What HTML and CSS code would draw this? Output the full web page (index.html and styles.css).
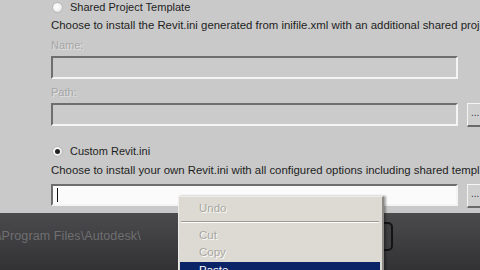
FILE: index.html
```html
<!DOCTYPE html>
<html>
<head>
<meta charset="utf-8">
<link rel="stylesheet" href="styles.css">
</head>
<body>
<div class="screen">
  <div class="panel">
    <div class="radio-row r1">
      <span class="radio"></span>
      <span class="radio-label">Shared Project Template</span>
    </div>
    <div class="desc d1">Choose to install the Revit.ini generated from inifile.xml with an additional shared project template</div>
    <div class="label l1">Name:</div>
    <div class="field-row">
      <div class="field disabled"></div>
    </div>
    <div class="label l2">Path:</div>
    <div class="field-row">
      <div class="field disabled"></div>
      <div class="btn">...</div>
    </div>
    <div class="radio-row r2">
      <span class="radio checked"></span>
      <span class="radio-label">Custom Revit.ini</span>
    </div>
    <div class="desc d2">Choose to install your own Revit.ini with all configured options including shared templates</div>
    <div class="field-row f3">
      <div class="field active"><span class="caret"></span></div>
      <div class="btn">...</div>
    </div>
  </div>
  <div class="band">
    <div class="path-text">\Program Files\Autodesk\</div>
    <div class="dropbtn"></div>
  </div>
  <div class="menu">
    <div class="item off">Undo</div>
    <div class="sep"></div>
    <div class="item off">Cut</div>
    <div class="item off">Copy</div>
    <div class="item sel">Paste</div>
  </div>
</div>
</body>
</html>
```
FILE: styles.css
```css
* { box-sizing: border-box; }
html, body { margin: 0; padding: 0; }
body {
  width: 480px;
  height: 270px;
  overflow: hidden;
  background: #c9c9c9;
  font-family: "Liberation Sans", Arial, sans-serif;
  font-size: 11px;
  color: #1e1e1e;
}
.screen {
  position: relative;
  width: 480px;
  height: 270px;
  display: flex;
  flex-direction: column;
  overflow: hidden;
}
.panel {
  height: 213px;
  padding-left: 51px;
  display: flex;
  flex-direction: column;
  white-space: nowrap;
  overflow: hidden;
}
.radio-row {
  display: flex;
  align-items: center;
  gap: 7px;
  height: 14px;
}
.r1 { margin-top: 0; }
.r2 { margin-top: 17px; }
.radio {
  width: 11px;
  height: 11px;
  border-radius: 50%;
  background: radial-gradient(circle at 40% 40%, #ffffff 0%, #f2f2f2 50%, #d8d8d8 100%);
  border: 1px solid #b8b8b8;
  margin-left: 1px;
  display: flex;
  align-items: center;
  justify-content: center;
}
.radio.checked::after {
  content: "";
  width: 5px;
  height: 5px;
  border-radius: 50%;
  background: #222;
}
.radio-label { font-size: 11px; }
.desc {
  height: 14px;
  line-height: 14px;
  margin-top: 4px;
  font-size: 11.4px;
  letter-spacing: 0;
}
.d2 { margin-top: 5px; }
.label {
  height: 13px;
  line-height: 13px;
  color: #a6a6a6;
  text-shadow: 1px 1px 0 #e2e2e2;
}
.l1 { margin-top: 7px; }
.l2 { margin-top: 7px; }
.field-row {
  display: flex;
  align-items: flex-start;
  gap: 9px;
  margin-top: 4px;
}
.f3 { margin-top: 7px; }
.field {
  width: 407px;
  height: 23px;
  border-top: 2px solid #6e6e6e;
  border-left: 2px solid #6e6e6e;
  border-bottom: 2px solid #f4f4f4;
  border-right: 2px solid #f4f4f4;
  flex: none;
}
.field.disabled { background: #cbcbcb; }
.field.active {
  background: #fbfbfb;
  height: 22px;
  padding: 2px 0 0 4px;
}
.caret {
  display: block;
  width: 1px;
  height: 14px;
  background: #111;
}
.btn {
  width: 24px;
  height: 24px;
  flex: none;
  background: #cfcfcf;
  border-top: 1px solid #f4f4f4;
  border-left: 1px solid #f4f4f4;
  border-bottom: 2px solid #6a6a6a;
  border-right: 2px solid #6a6a6a;
  font-size: 10px;
  line-height: 18px;
  padding-left: 3px;
  color: #333;
}
.band {
  flex: 1;
  background: linear-gradient(#4b4b4d 0%, #414143 40%, #323234 100%);
  display: flex;
  align-items: flex-start;
  position: relative;
}
.path-text {
  margin-top: 16px;
  margin-left: -2px;
  color: #6f6f71;
  font-size: 12.5px;
  letter-spacing: 0.1px;
}
.dropbtn {
  margin-left: 196px;
  margin-top: 9px;
  width: 56px;
  height: 29px;
  border: 2px solid #141416;
  border-radius: 5px;
  background: #3e3e40;
}
.menu {
  position: absolute;
  left: 178px;
  top: 196px;
  width: 206px;
  height: 80px;
  background: #dcdad3;
  border-top: 1px solid #eeede9;
  border-left: 1px solid #eeede9;
  border-right: 2px solid #8c8a86;
  padding: 3px 2px 0 1px;
  box-shadow: 2px 0 2px rgba(0,0,0,0.35);
}
.item {
  height: 17px;
  line-height: 17px;
  padding-left: 19px;
  font-size: 11.5px;
}
.item.off {
  color: #a9a7a1;
  text-shadow: 1px 1px 0 #fbfbf9;
}
.item.sel {
  background: #0b2468;
  color: #ffffff;
  margin-top: 1px;
}
.sep {
  height: 2px;
  margin: 4px 1px 4px 1px;
  border-top: 1px solid #9c9a95;
  border-bottom: 1px solid #fbfbf9;
}
```
